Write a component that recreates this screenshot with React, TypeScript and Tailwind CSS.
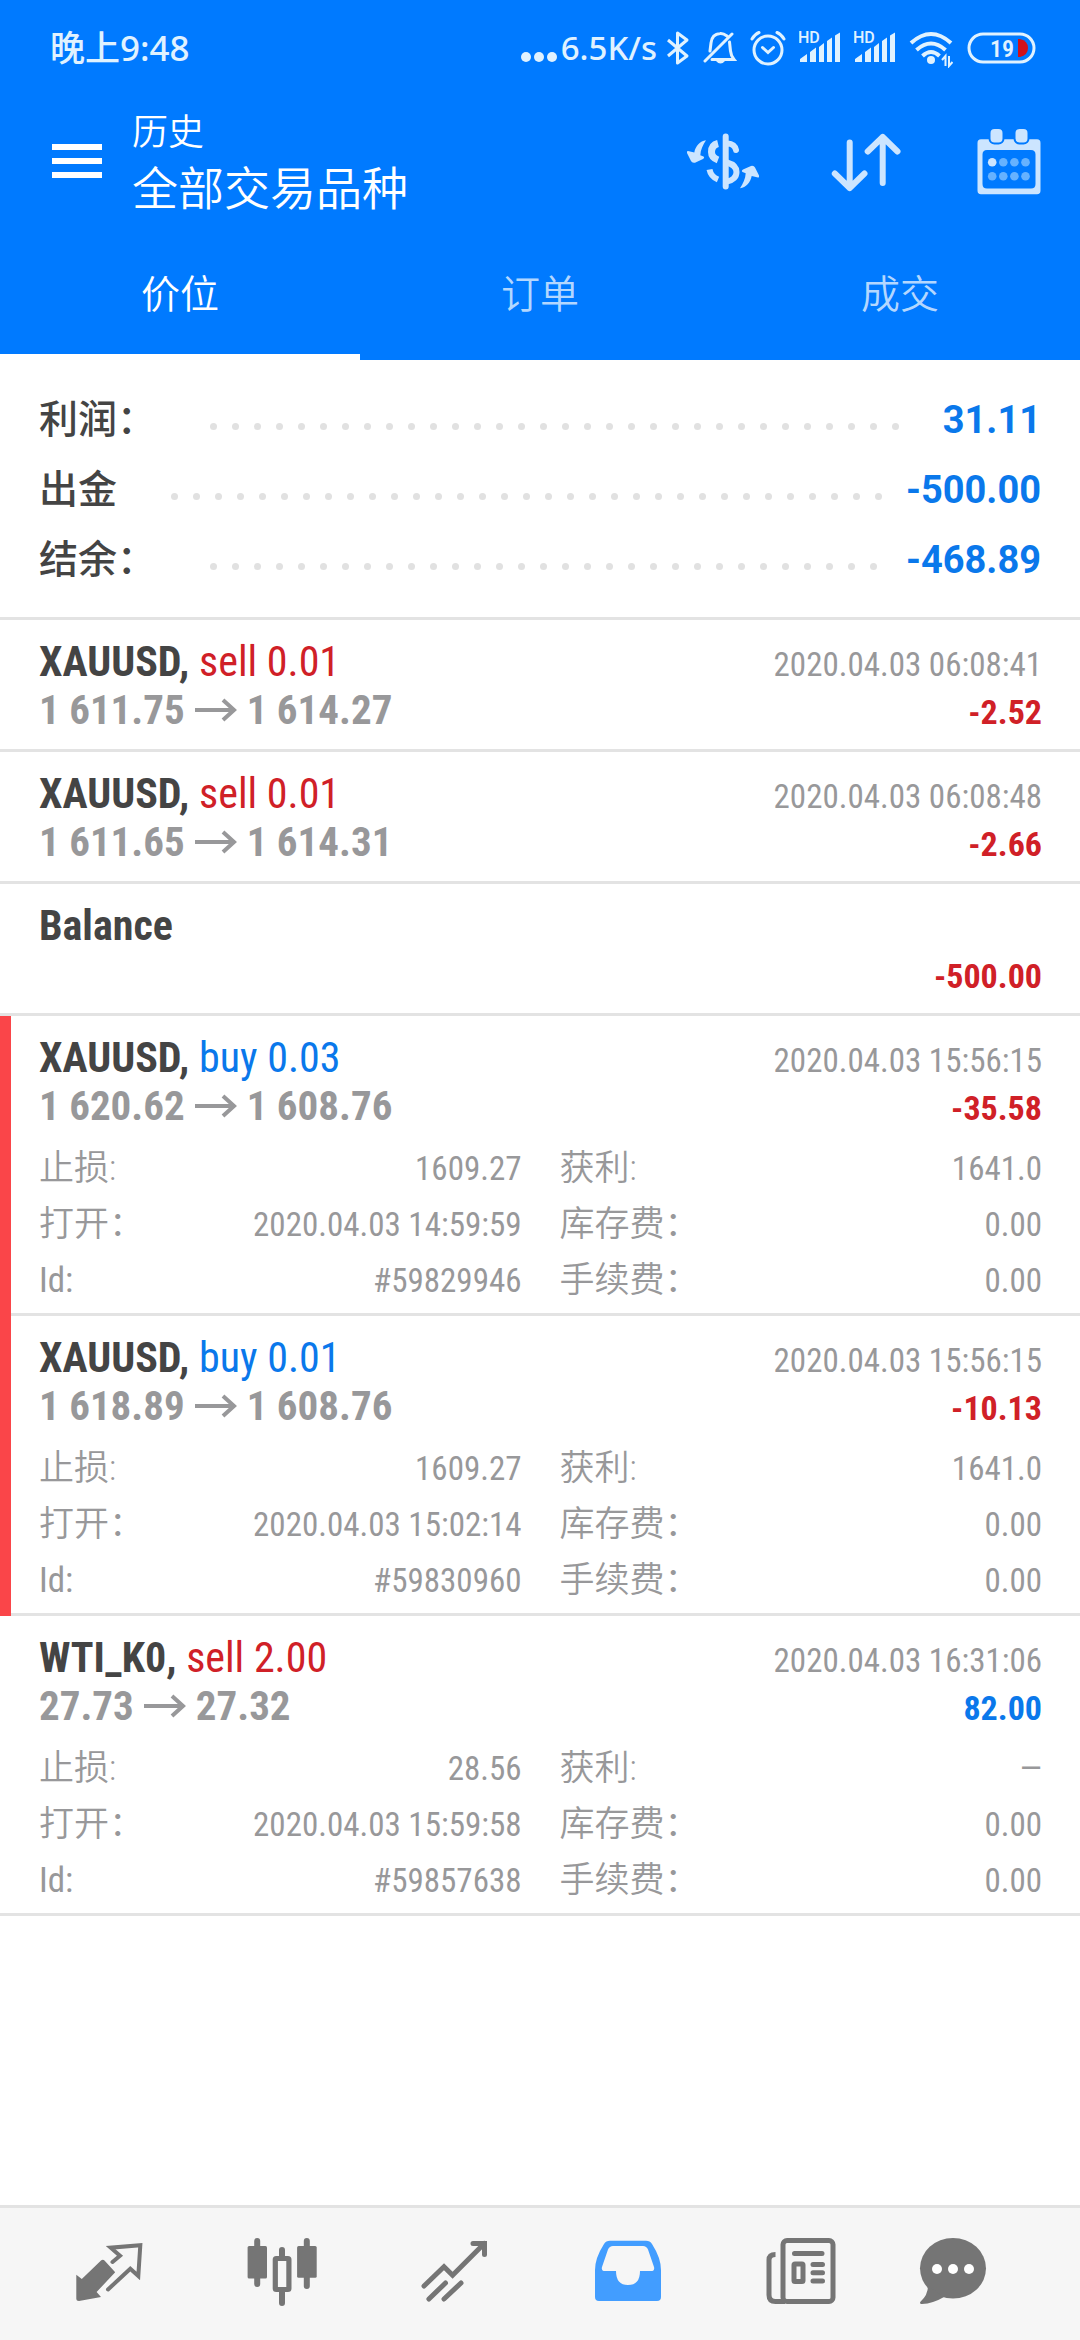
import { ReactNode } from "react";
import clsx from "clsx";

type Trade = {
  symbol: string;
  side?: "buy" | "sell";
  volume?: string;
  prices?: [string, string];
  closed?: string;
  profit: string;
  flagged?: boolean;
  details?: { sl: string; opened: string; id: string; tp: string; swap: string; fee: string };
};

const summary = [
  { label: "利润：", value: "31.11", dots: 32 },
  { label: "出金", value: "-500.00", dots: 33 },
  { label: "结余：", value: "-468.89", dots: 31 },
];

const trades: Trade[] = [
  {
    symbol: "XAUUSD",
    side: "sell",
    volume: "0.01",
    prices: ["1 611.75", "1 614.27"],
    closed: "2020.04.03 06:08:41",
    profit: "-2.52",
  },
  {
    symbol: "XAUUSD",
    side: "sell",
    volume: "0.01",
    prices: ["1 611.65", "1 614.31"],
    closed: "2020.04.03 06:08:48",
    profit: "-2.66",
  },
  { symbol: "Balance", profit: "-500.00" },
  {
    symbol: "XAUUSD",
    side: "buy",
    volume: "0.03",
    prices: ["1 620.62", "1 608.76"],
    closed: "2020.04.03 15:56:15",
    profit: "-35.58",
    flagged: true,
    details: { sl: "1609.27", opened: "2020.04.03 14:59:59", id: "#59829946", tp: "1641.0", swap: "0.00", fee: "0.00" },
  },
  {
    symbol: "XAUUSD",
    side: "buy",
    volume: "0.01",
    prices: ["1 618.89", "1 608.76"],
    closed: "2020.04.03 15:56:15",
    profit: "-10.13",
    flagged: true,
    details: { sl: "1609.27", opened: "2020.04.03 15:02:14", id: "#59830960", tp: "1641.0", swap: "0.00", fee: "0.00" },
  },
  {
    symbol: "WTI_K0",
    side: "sell",
    volume: "2.00",
    prices: ["27.73", "27.32"],
    closed: "2020.04.03 16:31:06",
    profit: "82.00",
    details: { sl: "28.56", opened: "2020.04.03 15:59:58", id: "#59857638", tp: "—", swap: "0.00", fee: "0.00" },
  },
];

function Signal() {
  return (
    <svg viewBox="0 0 42 40" className="h-10 w-[42px]" fill="currentColor">
      <path d="M1 34V31L8 26V34ZM11 34V24L17 19.500V34ZM20 34V19L25 15V34ZM28 34V13L33 9.500V34ZM36 34V7.500L41 4.500V34Z" />
      <text x="-1" y="15" fontSize="16" fontWeight="500" fontFamily="Roboto, sans-serif">
        HD
      </text>
    </svg>
  );
}

function StatusBar() {
  return (
    <div className="flex h-24 items-center gap-[13px] pr-11 pl-[50px] font-['Noto_Sans','Noto_Sans_CJK_SC',sans-serif] text-[33px] leading-10 font-medium text-[#e0f2ff]">
      <span className="mr-auto text-[35px]">晚上9:48</span>
      <span className="flex items-center">
        <svg viewBox="0 0 40 40" className="h-10 w-10" fill="currentColor">
          <circle cx="5" cy="29" r="5" />
          <circle cx="18" cy="29" r="5" />
          <circle cx="31" cy="29" r="5" />
        </svg>
        6.5K/s
      </span>
      <svg viewBox="0 0 24 40" className="-ml-1 h-10 w-6" fill="none" stroke="currentColor" strokeWidth="3">
        <path d="M2 12L21 28L11.500 35V5L21 12L2 28" strokeLinejoin="round" />
      </svg>
      <svg viewBox="0 0 34 40" className="h-10 w-[34px]" fill="none" stroke="currentColor" strokeWidth="3">
        <path d="M24 8Q20 5 17 5.500Q9 6 8 15L7 23M2 33L29 6M9 31.500H31Q28 28 27.500 23L26.500 14" strokeLinecap="round" />
        <path d="M13 33H22Q17.500 38 13 33Z" fill="currentColor" stroke="none" />
      </svg>
      <svg viewBox="0 0 36 40" className="h-10 w-9" fill="none" stroke="currentColor" strokeWidth="3" strokeLinecap="round">
        <circle cx="18" cy="22" r="14" />
        <path d="M2 11Q5 6 9 4.500M34 11Q31 6 27 4.500M12.500 19.500L18 24.500L23.500 19.500" />
      </svg>
      <Signal />
      <Signal />
      <svg viewBox="0 0 44 40" className="h-10 w-11" fill="none" stroke="currentColor" strokeWidth="4">
        <path d="M2 15Q22 -3 42 15M7.500 22Q22 9 36.500 22M13.500 28Q22 20 30.500 28" />
        <circle cx="22" cy="32" r="4" fill="currentColor" stroke="none" />
        <path d="M36.500 38V28L33 32M40 28V38L43.500 34" strokeWidth="2" />
      </svg>
      <svg viewBox="0 0 70 40" className="h-10 w-[70px]">
        <rect x="3" y="6" width="65" height="28" rx="14" fill="none" stroke="currentColor" strokeWidth="3" />
        <path d="M52 11H54Q62 13 62 20Q62 27 54 29H52Z" fill="#d0111b" />
        <text x="24" y="29" fontSize="24" fontWeight="600" fill="currentColor" fontFamily="'Roboto Condensed', Roboto, sans-serif">
          19
        </text>
      </svg>
    </div>
  );
}

function HeaderButton({ label, children }: { label: string; children: ReactNode }) {
  return (
    <button type="button" aria-label={label} className="text-[#cce5ff]">
      <svg viewBox="0 0 72 72" className="size-[72px]" fill="none" stroke="currentColor" strokeWidth="6">
        {children}
      </svg>
    </button>
  );
}

const swapArrow =
  "M19 15.300C13 16 8.500 21 7.300 27.500L1 26Q-.5 26 0 28L4 36Q5 38.300 8 37.700L16 34Q18 32.700 16.500 31.500L13.300 30.300C13.500 25 16 20 19 15.300Z";

function Header() {
  return (
    <header className="bg-[#007aff] font-['Roboto','Noto_Sans_CJK_SC',sans-serif] text-white">
      <StatusBar />
      <div className="flex h-[130px] items-center pr-[35px] pl-[52px]">
        <button type="button" aria-label="菜单" className="flex w-[50px] flex-col gap-2">
          <span className="h-1.5 bg-white" />
          <span className="h-1.5 bg-white" />
          <span className="h-1.5 bg-white" />
        </button>
        <div className="ml-[30px] flex-1 pt-1 font-[350]">
          <p className="text-[36px] leading-[52px]">历史</p>
          <h1 className="text-[46px] leading-[60px]">全部交易品种</h1>
        </div>
        <div className="flex gap-[71px]">
          <HeaderButton label="交易品种">
            <path d={swapArrow} fill="currentColor" stroke="none" />
            <path d={swapArrow} fill="currentColor" stroke="none" transform="rotate(180 36 39.300)" />
            <path d="M31 18.500C27 19.500 24.500 22.500 24.500 27C24.500 30.500 27 33.500 31 35" strokeWidth="7" />
            <path d="M31 54.500C26 52.500 23.500 49.500 22.500 44.500" />
            <path d="M38.700 11.500V61.500M49 25C48.500 21.500 45 18.500 41 18.500" strokeLinecap="round" />
            <path d="M40 37.500C47 39.500 49.500 43 49.500 47C49.500 52 46 55.500 40 56.500" />
          </HeaderButton>
          <HeaderButton label="排序">
            <path
              d="M19.700 17.500V63M4.800 48.500L19.700 63L34.500 48.500M52.700 58V12M37.700 26.500L52.700 12L67.500 26.500"
              strokeLinecap="round"
              strokeLinejoin="round"
            />
          </HeaderButton>
          <HeaderButton label="日期">
            <path
              d="M8 14.300H64Q67.500 14.300 67.500 18V65.500Q67.500 69.300 64 69.300H8Q4.500 69.300 4.500 65.500V18Q4.500 14.300 8 14.300ZM14 25Q9.500 25 9.500 29.500V59Q9.500 63.500 14 63.500H58Q62.500 63.500 62.500 59V29.500Q62.500 25 58 25Z"
              fill="currentColor"
              fillRule="evenodd"
              stroke="none"
            />
            <g fill="currentColor" stroke="#007aff" strokeWidth="2">
              <rect x="16.500" y="3" width="14" height="15.500" rx="5" />
              <rect x="41.500" y="3" width="14" height="15.500" rx="5" />
            </g>
            <g fill="#66b2ff" stroke="none">
              {[19.2, 30.3, 41.4, 52.5].map((x, i) => (
                <g key={x}>
                  <circle cx={x} cy="37.300" r="4.300" fill={i === 0 ? "#cce5ff" : "#66b2ff"} />
                  <circle cx={x} cy="51.300" r="4.300" />
                </g>
              ))}
            </g>
          </HeaderButton>
        </div>
      </div>
      <div role="tablist" className="grid h-[134px] grid-cols-3 text-[39px] font-[350]">
        {["价位", "订单", "成交"].map((tab, i) => (
          <button
            key={tab}
            type="button"
            role="tab"
            aria-selected={i === 0}
            className={clsx("border-b-6 pt-2.5", i === 0 ? "border-white" : "border-transparent text-[#b3d7ff]")}
          >
            {tab}
          </button>
        ))}
      </div>
    </header>
  );
}

function Summary() {
  return (
    <dl className="border-b-3 border-[#e3e3e3] px-[39px] pt-[25px] pb-[22px] text-[39px] leading-[70px] font-medium">
      {summary.map(({ label, value, dots }) => (
        <div key={label} className="flex items-center">
          <dt className="text-[#444]">{label}</dt>
          <dd className="ml-[54px] flex flex-1 items-center justify-between text-[#0a78eb]">
            <span aria-hidden="true" className="mt-3 flex gap-[15px]">
              {Array.from({ length: dots }, (_, i) => (
                <span key={i} className="size-[7px] rounded-full bg-[#e1e1e1]" />
              ))}
            </span>
            <span className="text-[38px] font-bold">{value}</span>
          </dd>
        </div>
      ))}
    </dl>
  );
}

function Detail({ label, value }: { label: string; value: string }) {
  return (
    <div className="flex justify-between leading-[56px]">
      {/* the lighter weight only suits the Chinese labels */}
      <dt className={clsx("text-[35px]", label !== "Id:" && "font-[350]")}>{label}</dt>
      <dd className="text-[33px]">{value}</dd>
    </div>
  );
}

function TradeRow({ trade }: { trade: Trade }) {
  const { symbol, side, volume, prices, closed, profit, flagged, details } = trade;
  return (
    <li className="flex">
      {flagged && <span className="w-[11px] bg-[#fa4549]" />}
      <div
        className={clsx(
          "flex-1 border-b-3 border-[#e3e3e3] pt-[18px] pr-[38px] font-['Roboto_Condensed','Liberation_Sans_Narrow','Noto_Sans_CJK_SC',sans-serif] text-[#98989a]",
          flagged ? "pl-7" : "pl-[39px]",
          details ? "pb-1" : "pb-[15px]"
        )}
      >
        <div className="flex h-12 items-baseline justify-between">
          <h2 className="text-[42px] leading-[48px] font-bold text-[#444]">
            {symbol}
            {side && (
              <>
                ,{" "}
                <span className={clsx("font-normal", side === "buy" ? "text-[#0a78eb]" : "text-[#d02027]")}>
                  {side} {volume}
                </span>
              </>
            )}
          </h2>
          {closed && <time className="text-[33px] leading-[44px]">{closed}</time>}
        </div>
        <div className="flex h-12 items-baseline justify-between">
          <p className="text-[41px] leading-[48px] font-bold">
            {prices ? (
              <>
                {prices[0]}
                <svg viewBox="0 0 42 24" className="mx-[10px] mb-1.5 inline h-6 w-[42px]" fill="none" stroke="currentColor" strokeWidth="4">
                  <path d="M0 12H39M28 2L39 12L28 22" />
                </svg>
                {prices[1]}
              </>
            ) : (
              "\u00a0"
            )}
          </p>
          <span className={clsx("text-[34px] leading-[44px] font-bold", profit.startsWith("-") ? "text-[#d02027]" : "text-[#0a78eb]")}>
            {profit}
          </span>
        </div>
        {details && (
          <dl className="mt-[11px] grid grid-cols-2 gap-x-[38px]">
            <Detail label="止损:" value={details.sl} />
            <Detail label="获利:" value={details.tp} />
            <Detail label="打开：" value={details.opened} />
            <Detail label="库存费：" value={details.swap} />
            <Detail label="Id:" value={details.id} />
            <Detail label="手续费：" value={details.fee} />
          </dl>
        )}
      </div>
    </li>
  );
}

function NavButton({ label, active, last, children }: { label: string; active?: boolean; last?: boolean; children: ReactNode }) {
  return (
    <button
      type="button"
      aria-label={label}
      className={clsx("flex justify-center", last ? "flex-[132]" : "flex-[173]", active ? "text-[#429dff]" : "text-[#757575]")}
    >
      <svg viewBox="0 0 72 72" className="size-[72px]" fill="currentColor">
        {children}
      </svg>
    </button>
  );
}

function BottomNav() {
  return (
    <nav className="mt-auto flex h-[135px] items-center border-t-3 border-[#e3e3e3] bg-[#f6f6f6] pr-[61px] pl-[22px]">
      <NavButton label="行情">
        <path d="M3.300 36.700L8.800 41L28 22.500Q29.800 21 31.500 22.500L42.200 34.300L23.600 54L28 59L6 63Q3.300 63 3.300 60.500Z" />
        <path
          d="M39.500 24L47 17.700L37.700 9.700L67.300 7.300L65.300 38L57.300 30.700L35 51.500"
          fill="none"
          stroke="currentColor"
          strokeWidth="4"
          strokeLinecap="round"
        />
      </NavButton>
      <NavButton label="图表">
        <path d="M11.200 3V46M36 12V22M36 50V65M60.800 3V48" fill="none" stroke="currentColor" strokeWidth="6" strokeLinecap="round" />
        <rect x="1.600" y="8" width="19.400" height="32.500" rx="1.500" />
        <rect x="51.100" y="8" width="19.600" height="31.700" rx="1.500" />
        <rect x="29.300" y="20.500" width="13.600" height="31" rx="1" fill="#f6f6f6" stroke="currentColor" strokeWidth="5.200" />
      </NavButton>
      <NavButton label="交易">
        <path
          d="M5 48L25 28.700L33.600 37.300L65.300 5.500M54 5.500H65.500V16.500M9.900 61L26.500 45M25 61L42 45"
          fill="none"
          stroke="currentColor"
          strokeWidth="5"
          strokeLinecap="round"
        />
      </NavButton>
      <NavButton label="历史" active>
        <path
          d="M18 2.700H54Q58 2.700 60 6Q69 20 69 32V59Q69 63 65 63H7Q3 63 3 59V32Q3 20 12 6Q14 2.700 18 2.700ZM21 8Q17.500 8 16 11.500L10 29Q9 33 13 33H24Q24 47 36 47Q48 47 48 33H59Q63 33 62 29L56 11.500Q54.500 8 51 8Z"
          fillRule="evenodd"
        />
      </NavButton>
      <NavButton label="新闻">
        <g fill="none" stroke="currentColor">
          <rect x="18" y="2.500" width="50" height="61" rx="4" strokeWidth="5" />
          <path d="M10.500 16.500Q4 16.500 4 22V57Q4 63.500 10.500 63.500H20" strokeWidth="5" />
          <rect x="29" y="26" width="9" height="17.500" rx="1" strokeWidth="5" />
          <path d="M29.500 15.500H57M48 26.500H57.500M48 34.700H57.500M48 43H57.500" strokeWidth="5" strokeLinecap="round" />
        </g>
      </NavButton>
      <NavButton label="消息" last>
        <ellipse cx="36" cy="30.300" rx="33" ry="30.300" />
        <path d="M11 48Q11 57 3.200 64Q2.500 66 5 66Q16 65.500 27 59Z" />
        <g fill="#fff">
          <circle cx="20" cy="31" r="5" />
          <circle cx="36" cy="31" r="5" />
          <circle cx="52" cy="31" r="5" />
        </g>
      </NavButton>
    </nav>
  );
}

export default function App() {
  return (
    <div lang="zh-CN" className="flex min-h-screen flex-col bg-white font-['Roboto','Noto_Sans_CJK_SC',sans-serif]">
      <Header />
      <main>
        <Summary />
        <ul>
          {trades.map((trade, i) => (
            <TradeRow key={i} trade={trade} />
          ))}
        </ul>
      </main>
      <BottomNav />
    </div>
  );
}
